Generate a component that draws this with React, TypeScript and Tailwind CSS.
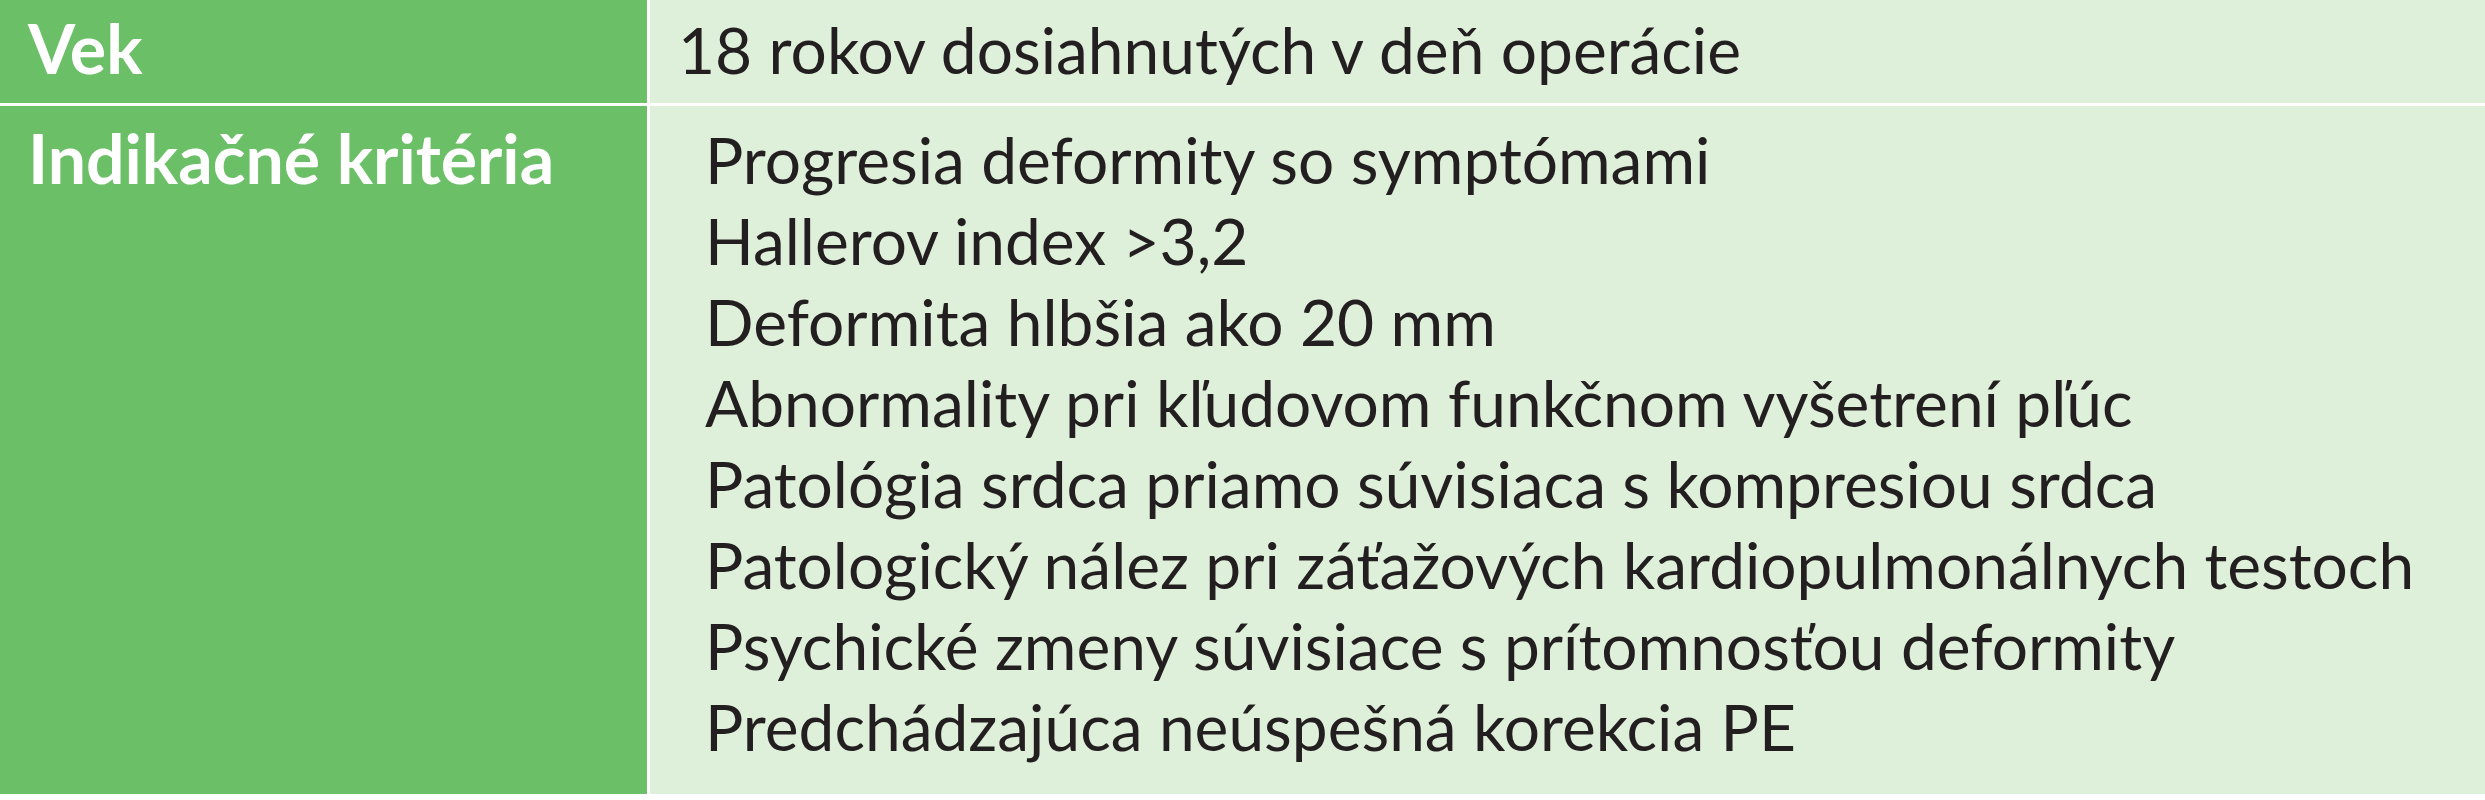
const criteria = [
  "Progresia deformity so symptómami",
  "Hallerov index >3,2",
  "Deformita hlbšia ako 20 mm",
  "Abnormality pri kľudovom funkčnom vyšetrení pľúc",
  "Patológia srdca priamo súvisiaca s kompresiou srdca",
  "Patologický nález pri záťažových kardiopulmonálnych testoch",
  "Psychické zmeny súvisiace s prítomnosťou deformity",
  "Predchádzajúca neúspešná korekcia PE",
];

function LabelCell({ children, className }: { children: React.ReactNode; className: string }) {
  return (
    <div className={`bg-[#6bbf67] pl-[28px] text-[68px] font-bold text-white ${className}`}>
      {children}
    </div>
  );
}

export default function App() {
  return (
    <div className="w-[2485px] h-[800px] bg-white font-['Lato','Open_Sans',sans-serif] text-[64px] leading-[81px]">
      <div className="grid grid-cols-[647px_1fr] grid-rows-[103px_688px] gap-[3px]">
        <LabelCell className="pt-[7px]">Vek</LabelCell>
        <div className="bg-[#dff0da] pl-[28px] pt-[9px] text-[#231f20]">
          18 rokov dosiahnutých v deň operácie
        </div>
        <LabelCell className="pt-[11px]">Indikačné kritéria</LabelCell>
        <div className="bg-[#dff0da] pl-[55px] pt-[13px] text-[#231f20]">
          {criteria.map((item) => (
            <div key={item}>{item}</div>
          ))}
        </div>
      </div>
    </div>
  );
}
